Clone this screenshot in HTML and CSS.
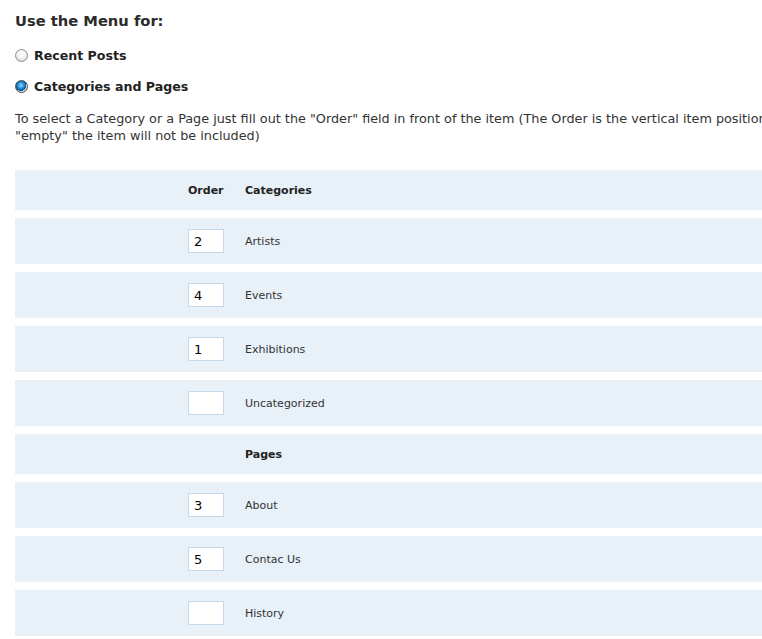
FILE: index.html
```html
<!DOCTYPE html>
<html>
<head>
<meta charset="utf-8">
<link rel="stylesheet" href="styles.css">
</head>
<body>
<div class="page">
  <h3 class="title">Use the Menu for:</h3>
  <label class="choice"><input class="radio" type="radio" name="menu"> Recent Posts</label>
  <label class="choice"><input class="radio" type="radio" name="menu" checked> Categories and Pages</label>
  <p class="note">To select a Category or a Page just fill out the "Order" field in front of the item (The Order is the vertical item position of the menu. If the field is<br>"empty" the item will not be included)</p>
  <div class="list">
    <div class="row head"><span class="c0"></span><span class="c1">Order</span><span class="c2">Categories</span></div>
    <div class="row"><span class="c0"></span><span class="c1"><input class="ord" type="text" value="2"></span><span class="c2">Artists</span></div>
    <div class="row"><span class="c0"></span><span class="c1"><input class="ord" type="text" value="4"></span><span class="c2">Events</span></div>
    <div class="row"><span class="c0"></span><span class="c1"><input class="ord" type="text" value="1"></span><span class="c2">Exhibitions</span></div>
    <div class="row"><span class="c0"></span><span class="c1"><input class="ord" type="text" value=""></span><span class="c2">Uncategorized</span></div>
    <div class="row head"><span class="c0"></span><span class="c1"></span><span class="c2">Pages</span></div>
    <div class="row"><span class="c0"></span><span class="c1"><input class="ord" type="text" value="3"></span><span class="c2">About</span></div>
    <div class="row"><span class="c0"></span><span class="c1"><input class="ord" type="text" value="5"></span><span class="c2">Contac Us</span></div>
    <div class="row"><span class="c0"></span><span class="c1"><input class="ord" type="text" value=""></span><span class="c2">History</span></div>
  </div>
</div>
</body>
</html>
```
FILE: styles.css
```css
html { overflow: hidden; }
body {
  margin: 0;
  background: #fff;
  font-family: "DejaVu Sans", Verdana, sans-serif;
  color: #333;
}
.page {
  width: 1000px;
  padding: 12px 0 0 15px;
}
.title {
  margin: 0 0 17px;
  font-size: 14.7px;
  font-weight: bold;
  line-height: 18px;
  color: #2b2b2b;
}
.choice {
  display: flex;
  align-items: center;
  gap: 6px;
  height: 17px;
  margin-bottom: 14px;
  font-size: 12.6px;
  font-weight: bold;
  color: #222;
}
.radio {
  appearance: none;
  -webkit-appearance: none;
  box-sizing: border-box;
  margin: 0;
  width: 13px;
  height: 13px;
  border-radius: 50%;
  border: 1px solid #8f8f8f;
  background: radial-gradient(circle at 50% 35%, #ffffff 0%, #f2f2f2 45%, #c9c9c9 100%);
}
.radio:checked {
  border-color: #4a4a4a;
  background:
    radial-gradient(circle at 45% 40%, #9fd8ff 0%, #1f8fd8 35%, #0b4f86 60%, transparent 62%),
    radial-gradient(circle, #f4f4f4 0%, #d8d8d8 100%);
}
.note {
  margin: 15px 0 26px;
  font-size: 12.8px;
  line-height: 17px;
  white-space: nowrap;
  color: #333;
}
.list {
  display: flex;
  flex-direction: column;
  gap: 8px;
}
.row {
  display: flex;
  align-items: center;
  height: 46px;
  background: #e8f0f8;
  font-size: 11px;
}
.row.head {
  height: 40px;
  font-weight: bold;
  color: #222;
}
.c0 { width: 173px; }
.c1 { width: 57px; display: flex; }
.c2 { flex: 1; }
.ord {
  box-sizing: border-box;
  width: 36px;
  height: 24px;
  margin: 0;
  padding: 0 5px;
  border: 1px solid #c6d9e9;
  background: #fff;
  font-family: "DejaVu Sans", Verdana, sans-serif;
  font-size: 13px;
  color: #000;
  outline: none;
}
```
